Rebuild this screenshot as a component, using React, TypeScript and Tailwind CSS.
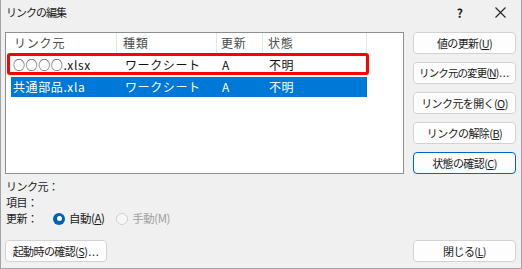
import React from "react";

const FONT = { fontFamily: '"Noto Sans CJK JP", "Noto Sans", sans-serif' };

function Btn({ children, focused, tight }: { children: React.ReactNode; focused?: boolean; tight?: boolean }) {
  return (
    <div
      className={
        "h-[22px] w-full flex items-center justify-center rounded-[4px] bg-[#fdfdfd] text-[#1a1a1a] whitespace-nowrap " +
        (tight ? "text-[10.5px] tracking-[-0.9px] " : "text-[11px] tracking-[-0.6px] ") +
        (focused ? "border border-[#0067c0]" : "border border-[#d3d3d3]")
      }
    >
      {children}
    </div>
  );
}

function U({ c }: { c: string }) {
  return <span className="underline underline-offset-[1px]">{c}</span>;
}

function Dots() {
  return <span className="tracking-[0.6px] ml-[1px]">...</span>;
}

export default function App() {
  return (
    <div
      style={FONT}
      className="w-[522px] h-[269px] bg-[#f0f0f0] border-x border-b border-[#a3a3a3] flex flex-col text-[#1a1a1a]"
    >
      {/* title bar */}
      <div className="h-[24px] flex items-center pl-[5px] shrink-0">
        <span className="text-[11px] tracking-[-1px] text-[#1a1a1a]">リンクの編集</span>
        <div className="flex-1" />
        <span className="text-[12px] font-semibold mr-[32px] mt-[1px]">?</span>
        <svg width="11" height="11" viewBox="0 0 11 11" className="mr-[15px]">
          <path d="M0.5 0.5 L10.5 10.5 M10.5 0.5 L0.5 10.5" stroke="#222" strokeWidth="1.1" />
        </svg>
      </div>

      <div className="flex-1 flex px-[4px] pt-[8px] pb-[6px]">
        {/* left column */}
        <div className="w-[399px] flex flex-col">
          <div className="relative h-[142px] border border-[#8e8f8f] bg-white">
            {/* header */}
            <div className="flex h-[20px] text-[12px] tracking-[0.8px] text-[#4a4a4a]">
              <div className="w-[111px] pl-[8px] border-r border-[#e5e5e5] flex items-center">リンク元</div>
              <div className="w-[100px] pl-[6px] border-r border-[#e5e5e5] flex items-center">種類</div>
              <div className="w-[46px] pl-[4px] border-r border-[#e5e5e5] flex items-center">更新</div>
              <div className="w-[104px] pl-[5px] border-r border-[#e5e5e5] flex items-center">状態</div>
            </div>
            {/* rows */}
            <div className="ml-[5px] w-[356px] mt-[2px] flex h-[20px] items-center text-[12px] tracking-[0.6px] text-[#111]">
              <div className="w-[106px] pl-[2px]">○○○○.xlsx</div>
              <div className="w-[100px] pl-[8px]">ワークシート</div>
              <div className="w-[46px] pl-[5px]">A</div>
              <div className="w-[104px] pl-[6px]">不明</div>
            </div>
            <div className="ml-[5px] w-[356px] mt-[2px] flex h-[20px] items-center bg-[#0078d7] text-[12px] tracking-[0.6px] text-white">
              <div className="w-[106px] pl-[2px]">共通部品.xla</div>
              <div className="w-[100px] pl-[8px]">ワークシート</div>
              <div className="w-[46px] pl-[5px]">A</div>
              <div className="w-[104px] pl-[6px]">不明</div>
            </div>
            {/* red annotation box */}
            <div className="absolute left-[1px] top-[20px] w-[362px] h-[22px] border-[3px] border-[#ff0000] rounded-[3px]" />
          </div>

          <div className="mt-[4px] flex flex-col text-[11px] tracking-[-0.5px] pl-[1px]">
            <div className="h-[16px] flex items-center">リンク元：</div>
            <div className="h-[16px] flex items-center">項目：</div>
            <div className="h-[17px] flex items-center">
              <span className="w-[47px]">更新：</span>
              <span className="w-[12px] h-[12px] rounded-full bg-[#005fb8] flex items-center justify-center">
                <span className="w-[5px] h-[5px] rounded-full bg-white" />
              </span>
              <span className="ml-[4px] text-[11.5px]">
                自動(<U c="A" />)
              </span>
              <span className="ml-[12px] w-[12px] h-[12px] rounded-full border border-[#cfcfcf] bg-[#f7f7f7]" />
              <span className="ml-[4px] text-[11.5px] text-[#a0a0a0]">手動(M)</span>
            </div>
          </div>
          <div className="flex-1" />
          <div className="w-[102px]">
            <Btn>
              起動時の確認(<U c="S" />)<Dots />
            </Btn>
          </div>
        </div>

        {/* right column */}
        <div className="ml-[9px] w-[103px] flex flex-col">
          <div className="flex flex-col gap-[8px]">
            <Btn>
              値の更新(<U c="U" />)
            </Btn>
            <Btn tight>
              リンク元の変更(<U c="N" />)<Dots />
            </Btn>
            <Btn>
              リンク元を開く(<U c="O" />)
            </Btn>
            <Btn>
              リンクの解除(<U c="B" />)
            </Btn>
            <Btn focused>
              状態の確認(<U c="C" />)
            </Btn>
          </div>
          <div className="flex-1" />
          <Btn>
            閉じる(<U c="L" />)
          </Btn>
        </div>
      </div>
    </div>
  );
}
